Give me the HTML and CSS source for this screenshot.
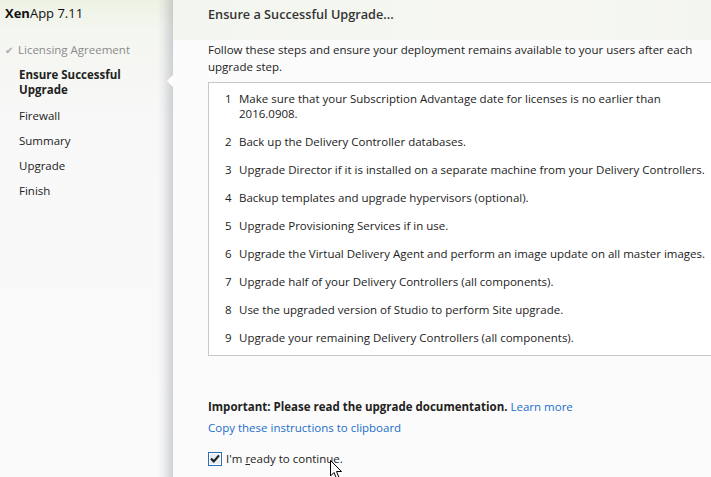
FILE: index.html
```html
<!DOCTYPE html>
<html>
<head>
<meta charset="utf-8">
<link rel="stylesheet" href="styles.css">
</head>
<body>
<div class="app">
  <aside class="sidebar">
    <div class="brand"><b>Xen</b>App 7.11</div>
    <ul class="steps">
      <li class="done"><span class="tick">✔</span>Licensing Agreement</li>
      <li class="active">Ensure Successful Upgrade<span class="notch"></span></li>
      <li>Firewall</li>
      <li>Summary</li>
      <li>Upgrade</li>
      <li>Finish</li>
    </ul>
  </aside>
  <main class="main">
    <header class="head">Ensure a Successful Upgrade...</header>
    <section class="content">
      <p class="intro">Follow these steps and ensure your deployment remains available to your users after each upgrade step.</p>
      <ol class="box">
        <li><span class="n">1</span><span class="t">Make sure that your Subscription Advantage date for licenses is no earlier than 2016.0908.</span></li>
        <li><span class="n">2</span><span class="t">Back up the Delivery Controller databases.</span></li>
        <li><span class="n">3</span><span class="t">Upgrade Director if it is installed on a separate machine from your Delivery Controllers.</span></li>
        <li><span class="n">4</span><span class="t">Backup templates and upgrade hypervisors (optional).</span></li>
        <li><span class="n">5</span><span class="t">Upgrade Provisioning Services if in use.</span></li>
        <li><span class="n">6</span><span class="t">Upgrade the Virtual Delivery Agent and perform an image update on all master images.</span></li>
        <li><span class="n">7</span><span class="t">Upgrade half of your Delivery Controllers (all components).</span></li>
        <li><span class="n">8</span><span class="t">Use the upgraded version of Studio to perform Site upgrade.</span></li>
        <li><span class="n">9</span><span class="t">Upgrade your remaining Delivery Controllers (all components).</span></li>
      </ol>
      <p class="important"><b>Important: Please read the upgrade documentation.</b> <a class="link">Learn more</a></p>
      <p class="copy"><a class="link">Copy these instructions to clipboard</a></p>
      <label class="check">
        <span class="cb"><svg width="10" height="9" viewBox="0 0 10 9"><path d="M1 4.6 L3.8 7.4 L9 1.4" fill="none" stroke="#222" stroke-width="2.2"/></svg></span>
        <span>I'm <u>r</u>eady to continue.</span>
      </label>
    </section>
  </main>
  <svg class="cursor" width="13" height="20" viewBox="0 0 13 20"><path d="M0.5 0.5 L0.5 16 L4 12.5 L6.5 18.5 L9 17.5 L6.5 11.5 L11.5 11.5 Z" fill="#fff" stroke="#000" stroke-width="1"/></svg>
</div>
</body>
</html>
```
FILE: styles.css
```css
* { box-sizing: border-box; }
html, body { margin: 0; padding: 0; }
body {
  font-family: "Open Sans", "Noto Sans", sans-serif;
  font-size: 11.5px;
  color: #222;
  width: 711px;
  height: 477px;
  overflow: hidden;
}
.app {
  position: relative;
  display: flex;
  width: 711px;
  height: 477px;
  overflow: hidden;
}
.sidebar {
  width: 173px;
  flex: none;
  background:
    linear-gradient(to right, rgba(0,0,0,0) 0, rgba(0,0,0,0) 158px, rgba(120,125,140,0.10) 164px, rgba(110,115,130,0.30) 173px),
    linear-gradient(to bottom, #eef2e4 0, #f4f6f0 30px, #f8f8f8 120px, #fafafa 477px);
  position: relative;
}
.brand {
  font-size: 13px;
  color: #111;
  padding: 4px 0 0 5px;
  height: 42px;
}
.brand b { font-weight: 700; }
.steps {
  list-style: none;
  margin: 0;
  padding: 0 0 0 19px;
}
.steps li {
  position: relative;
  font-size: 11.5px;
  line-height: 15px;
  margin-bottom: 10px;
  color: #222;
}
.steps li.done { color: #8a8a8a; margin-left: -14px; margin-bottom: 9px; }
.steps li.done .tick { color: #a9a9a9; font-size: 10px; margin-right: 5px; }
.steps li.active { font-weight: 700; width: 112px; margin-bottom: 11px; }
.notch {
  position: absolute;
  right: -42px;
  top: 8px;
  width: 0;
  height: 0;
  border-top: 6px solid transparent;
  border-bottom: 6px solid transparent;
  border-right: 6px solid #fff;
}
.main {
  flex: 1;
  display: flex;
  flex-direction: column;
  background: #fbfbfb;
  min-width: 0;
}
.head {
  height: 40px;
  padding: 5px 0 0 35px;
  background: linear-gradient(to right, #f3f6ee, #f6f7f3 70%, #f3f6ee);
  font-size: 12.7px;
  font-weight: 600;
  color: #333;
}
.content {
  padding: 0 0 0 35px;
}
.intro {
  margin: 1px 0 0 0;
  width: 492px;
  line-height: 17px;
  color: #222;
}
.box {
  list-style: none;
  margin: 7px 0 0 0;
  padding: 8px 0 9px 16px;
  width: 520px;
  height: 274px;
  border: 1px solid #c8c8c8;
  background: #fff;
}
.box li {
  display: flex;
  line-height: 15px;
  margin-bottom: 13px;
}
.box .n { width: 14px; flex: none; }
.box .t { width: 468px; }
.important {
  margin: 43px 0 0 0;
  line-height: 16px;
}
.important b { font-weight: 700; color: #222; }
.link { color: #1a6ec9; text-decoration: none; }
.copy { margin: 5px 0 0 0; line-height: 16px; }
.check {
  display: flex;
  align-items: center;
  gap: 4px;
  margin-top: 15px;
}
.cb {
  width: 14px;
  height: 14px;
  border: 1px solid #2a6fb3;
  background: #e8eef5;
  display: flex;
  align-items: center;
  justify-content: center;
  box-shadow: inset 0 0 0 1px #fff;
}
.cursor {
  position: absolute;
  left: 330px;
  top: 460px;
}
```
